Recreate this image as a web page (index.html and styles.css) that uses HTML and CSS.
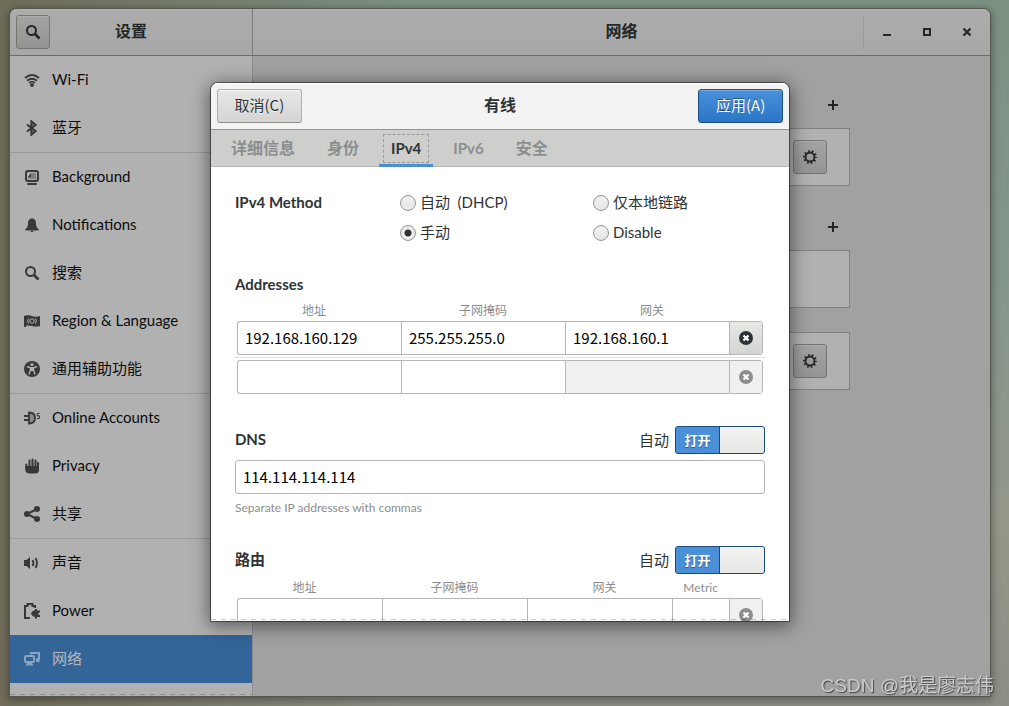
FILE: index.html
```html
<!DOCTYPE html>
<html lang="zh-CN">
<head>
    <meta charset="UTF-8">
    <meta name="viewport" content="width=device-width, initial-scale=1.0">
    <title>设置</title>
    <link rel="stylesheet" href="styles.css">
</head>
<body>
    <svg class="defs" aria-hidden="true">
        <symbol id="i-search" viewBox="0 0 16 16"><circle cx="6.5" cy="6.5" r="4.5" fill="none" stroke="currentColor" stroke-width="2"/><path d="M10 10l4.5 4.5" stroke="currentColor" stroke-width="2.6"/></symbol>
        <symbol id="i-gear" viewBox="0 0 16 16"><circle cx="8" cy="8" r="4.5" fill="none" stroke="currentColor" stroke-width="1.9"/><circle cx="8" cy="8" r="6" fill="none" stroke="currentColor" stroke-width="1.9" stroke-dasharray="1.6 2.17" stroke-dashoffset=".8"/></symbol>
        <symbol id="i-plus" viewBox="0 0 16 16"><path d="M8 3v10M3 8h10" stroke="currentColor" stroke-width="2"/></symbol>
        <symbol id="i-remove" viewBox="0 0 16 16"><circle cx="8" cy="8" r="7" fill="currentColor"/><path d="M5.5 5.5l5 5M10.5 5.5l-5 5" stroke="#fff" stroke-width="2.2"/></symbol>
    </svg>

    <div class="window">
        <header class="side-header">
            <button class="btn dim-btn" aria-label="搜索"><svg class="icon"><use href="#i-search"/></svg></button>
            <h1>设置</h1>
        </header>
        <header class="main-header">
            <h1>网络</h1>
            <div class="controls">
                <button aria-label="最小化"><svg class="icon" viewBox="0 0 16 16"><path d="M4 11h8" stroke="currentColor" stroke-width="2"/></svg></button>
                <button aria-label="最大化"><svg class="icon" viewBox="0 0 16 16"><path d="M5 5h6v6H5z" fill="none" stroke="currentColor" stroke-width="2"/></svg></button>
                <button aria-label="关闭"><svg class="icon" viewBox="0 0 16 16"><path d="M4.500 4.500l7 7M11.500 4.500l-7 7" stroke="currentColor" stroke-width="2.200"/></svg></button>
            </div>
        </header>

        <nav class="sidebar">
            <a href="#"><svg class="icon" viewBox="0 0 16 16"><g fill="none" stroke="currentColor" stroke-width="1.8"><path d="M1 6q7-6 14 0"/><path d="M3 8.700q5-4 10 0"/><path d="M5 11q3-2.400 6 0" stroke-width="1.500"/></g><circle cx="8" cy="13" r="2" fill="currentColor"/></svg>Wi-Fi</a>
            <a href="#"><svg class="icon" viewBox="0 0 16 16"><path d="M3 4.500l8.500 6.500L7.500 14.500V1.500L11.500 5 3 11.500" fill="none" stroke="currentColor" stroke-width="2.200"/></svg>蓝牙</a>
            <a href="#" class="sep"><svg class="icon" viewBox="0 0 16 16"><rect x="2" y="2" width="12" height="10" rx="2" fill="none" stroke="currentColor" stroke-width="2"/><path d="M7 4h5v6H4V8h3z" fill="currentColor" opacity=".4"/><path d="M4 8l3-4v4z" fill="currentColor"/><rect x="3" y="14" width="10" height="2" rx="1" fill="currentColor"/></svg>Background</a>
            <a href="#"><svg class="icon" viewBox="0 0 16 16"><path d="M8 1.500c-3 0-4 2.500-4 5 0 3-.6 4-2.500 5.500v1.500h13V12C12.600 10.500 12 9.500 12 6.500c0-2.500-1-5-4-5zM6.500 14h3a1.500 1.200 0 0 1-3 0z" fill="currentColor"/></svg>Notifications</a>
            <a href="#"><svg class="icon"><use href="#i-search"/></svg>搜索</a>
            <a href="#"><svg class="icon" viewBox="0 0 16 16"><path d="M0 3q4-1.500 8 0t8 0v10q-4 1-8 0t-6-.3V14H0z" fill="currentColor"/><circle cx="8" cy="8" r="2.200" fill="none" stroke="#b1b1b1"/><path d="M4.500 5.500q-1.500 2.500 0 5M11.500 5.500q1.500 2.500 0 5" fill="none" stroke="#b1b1b1"/></svg>Region &amp; Language</a>
            <a href="#"><svg class="icon" viewBox="0 0 16 16"><circle cx="8" cy="8" r="8" fill="currentColor"/><circle cx="8" cy="3.500" r="1.600" fill="#b1b1b1"/><path d="M3 5.500l3.500 1.200V9L5 13.500M13 5.500L9.500 6.700V9l1.500 4.500" fill="none" stroke="#b1b1b1" stroke-width="1.500"/><path d="M6 6h4v4H6z" fill="#b1b1b1"/></svg>通用辅助功能</a>
            <a href="#" class="sep"><svg class="icon" viewBox="0 0 16 16"><path d="M0 6h5M0 10h5" stroke="currentColor" stroke-width="2"/><path d="M5 2.500q6 0 6 5.500t-6 5.500z" fill="currentColor" fill-opacity=".3" stroke="currentColor" stroke-width="1.800"/><path d="M15.500 3.500h-2.300v2.300h2.300v2.700H13" fill="none" stroke="currentColor"/></svg>Online Accounts</a>
            <a href="#"><svg class="icon" viewBox="0 0 16 16"><path d="M5.500 9V2.500M8.500 9V1.500M11.500 9V2.500M14 9.500V5M2.300 10V6.500" stroke="currentColor" stroke-width="2" stroke-linecap="round"/><path d="M1.300 8H15v4q0 3.500-4 3.500H6q-4.700 0-4.700-4z" fill="currentColor"/></svg>Privacy</a>
            <a href="#"><svg class="icon" viewBox="0 0 16 16"><path d="M13 3L3 8l10 5" fill="none" stroke="currentColor" stroke-width="2"/><g fill="currentColor"><circle cx="13" cy="3" r="3"/><circle cx="3" cy="8" r="3"/><circle cx="13" cy="13" r="3"/></g></svg>共享</a>
            <a href="#" class="sep"><svg class="icon" viewBox="0 0 16 16"><path d="M0 5h2.500L6 2v12l-3.500-3H0z" fill="currentColor"/><path d="M8.500 5q2 3 0 6M11.500 3q3 5 0 10" fill="none" stroke="currentColor" stroke-width="1.800"/></svg>声音</a>
            <a href="#"><svg class="icon" viewBox="0 0 16 16"><path d="M6 15H1V3h2.500V1h5v2H11v2" fill="none" stroke="currentColor" stroke-width="2"/><path d="M7 10.500q1-3 4-3.500V6h2v1.500h3v2h-1.500v2.500H16v2h-3v1.500h-2V14q-3-.5-4-3.500z" fill="currentColor"/></svg>Power</a>
            <a href="#" class="active" aria-current="page"><svg class="icon" viewBox="0 0 16 16"><path d="M7 3.500V2h8v6h-2.500" fill="none" stroke="currentColor" stroke-width="2"/><rect x="1" y="5" width="9" height="6" rx="1" fill="none" stroke="currentColor" stroke-width="2"/><path d="M3 12h5l1.500 2.500h-8zM12 8h2.500l1.500 3h-4z" fill="currentColor"/></svg>网络</a>
            <div class="undershoot"></div>
        </nav>

        <main class="content">
            <div class="panel">
                <section>
                    <div class="panel-head"><button aria-label="添加有线"><svg class="icon"><use href="#i-plus"/></svg></button></div>
                    <div class="card"><button class="btn dim-btn" aria-label="选项"><svg class="icon"><use href="#i-gear"/></svg></button></div>
                </section>
                <section>
                    <div class="panel-head"><button aria-label="添加 VPN"><svg class="icon"><use href="#i-plus"/></svg></button></div>
                    <div class="card"></div>
                </section>
                <section>
                    <div class="card"><button class="btn dim-btn" aria-label="代理选项"><svg class="icon"><use href="#i-gear"/></svg></button></div>
                </section>
            </div>
        </main>

        <div class="overlay">
            <form class="dialog" role="dialog" aria-labelledby="dialog-title">
                <div class="dialog-header">
                    <button type="button" class="btn">取消(C)</button>
                    <h2 id="dialog-title">有线</h2>
                    <button type="submit" class="btn primary">应用(A)</button>
                </div>
                <div class="tabs" role="tablist">
                    <button type="button" role="tab">详细信息</button>
                    <button type="button" role="tab">身份</button>
                    <button type="button" role="tab" class="latin active" aria-selected="true">IPv4</button>
                    <button type="button" role="tab" class="latin">IPv6</button>
                    <button type="button" role="tab">安全</button>
                </div>
                <div class="dialog-body">
                    <div class="methods" role="radiogroup" aria-labelledby="method-label">
                        <h3 id="method-label">IPv4 Method</h3>
                        <label><input type="radio" name="method">自动&nbsp; (DHCP)</label>
                        <label><input type="radio" name="method">仅本地链路</label>
                        <label class="second"><input type="radio" name="method" checked>手动</label>
                        <label><input type="radio" name="method">Disable</label>
                    </div>

                    <h3>Addresses</h3>
                    <table class="entries">
                        <colgroup><col><col><col><col class="col-remove"></colgroup>
                        <thead>
                            <tr><th>地址</th><th>子网掩码</th><th class="gateway">网关</th><td></td></tr>
                        </thead>
                        <tbody>
                            <tr class="row">
                                <td><input type="text" aria-label="地址" value="192.168.160.129"></td>
                                <td><input type="text" aria-label="子网掩码" value="255.255.255.0"></td>
                                <td><input type="text" aria-label="网关" value="192.168.160.1"></td>
                                <td><button type="button" class="remove" aria-label="删除"><svg class="icon"><use href="#i-remove"/></svg></button></td>
                            </tr>
                            <tr><td colspan="4"><hr></td></tr>
                            <tr class="row">
                                <td><input type="text" aria-label="地址"></td>
                                <td><input type="text" aria-label="子网掩码"></td>
                                <td><input type="text" aria-label="网关" disabled></td>
                                <td><button type="button" class="remove" aria-label="删除" disabled><svg class="icon"><use href="#i-remove"/></svg></button></td>
                            </tr>
                        </tbody>
                    </table>

                    <div class="section-head">
                        <h3><label for="dns">DNS</label></h3>
                        <label class="switch">自动<input type="checkbox" checked><span class="track"><span class="on">打开</span><span class="knob"></span></span></label>
                    </div>
                    <input type="text" id="dns" class="entry" value="114.114.114.114">
                    <p class="hint">Separate IP addresses with commas</p>

                    <div class="section-head">
                        <h3>路由</h3>
                        <label class="switch">自动<input type="checkbox" checked><span class="track"><span class="on">打开</span><span class="knob"></span></span></label>
                    </div>
                    <table class="entries">
                        <colgroup><col><col><col><col class="col-metric"><col class="col-remove"></colgroup>
                        <thead>
                            <tr><th>地址</th><th>子网掩码</th><th class="gateway">网关</th><th>Metric</th><td></td></tr>
                        </thead>
                        <tbody>
                            <tr class="row">
                                <td><input type="text" aria-label="地址"></td>
                                <td><input type="text" aria-label="子网掩码"></td>
                                <td><input type="text" aria-label="网关"></td>
                                <td><input type="text" aria-label="Metric"></td>
                                <td><button type="button" class="remove" aria-label="删除" disabled><svg class="icon"><use href="#i-remove"/></svg></button></td>
                            </tr>
                        </tbody>
                    </table>
                </div>
                <div class="undershoot"></div>
            </form>
        </div>
    </div>
    <div class="watermark">CSDN @我是廖志伟</div>
</body>
</html>
```
FILE: styles.css
```css
* {
    box-sizing: border-box;
}
body {
    margin: 0;
    height: 100vh;
    padding: 9px 19px 10px 10px;
    font-family: Lato, "Noto Sans CJK SC", sans-serif;
    font-size: 15px;
    line-height: 24px;
    color: #2e3436;
    background: linear-gradient(to right, rgba(110, 105, 85, 0.9), rgba(110, 105, 85, 0) 40%),
        linear-gradient(#7c9182, #86968c 40%, #94988a 75%, #8b8f84);
}
h1, h2, h3, p {
    margin: 0;
    font-size: 15px;
}
h1, h2 {
    padding-bottom: 2px;
    font-size: 16px;
}
h3 {
    padding-bottom: 2px;
    line-height: 22px;
}
button, input {
    font: inherit;
    color: inherit;
    margin: 0;
}
button {
    border: none;
    background: none;
    padding: 0;
}
.defs {
    display: none;
}
.icon {
    display: block;
    flex: none;
    width: 16px;
    height: 16px;
}

.window {
    position: relative;
    height: 100%;
    display: grid;
    grid-template-columns: 243px 1fr;
    grid-template-rows: 47px minmax(0, 1fr);
    border-radius: 7px 7px 0 0;
    box-shadow: 0 0 0 1px #55574f, 0 2px 8px 2px rgba(0, 0, 0, 0.35);
    background: #a1a1a1;
}
.side-header, .main-header {
    display: grid;
    align-items: center;
    color: #222729;
    background: linear-gradient(#acacac, #a8a8a8);
    border-bottom: 1px solid #6b6b6b;
    box-shadow: inset 0 1px #b3b3b3;
}
.side-header {
    grid-template-columns: 1fr auto 1fr;
    padding-left: 6px;
    padding-right: 6px;
    border-right: 1px solid #7b7b7b;
    border-top-left-radius: 7px;
}
.main-header {
    grid-template-columns: 127px 1fr 127px;
    border-top-right-radius: 7px;
    text-align: center;
}
.main-header h1 {
    grid-column: 2;
}
.controls {
    display: flex;
    height: 34px;
    padding-left: 3px;
    border-left: 1px solid #999;
}
.controls button {
    width: 40px;
    display: grid;
    place-items: center;
    color: #202526;
}
.btn {
    min-width: 85px;
    height: 34px;
    padding: 0 15px;
    border: 1px solid #b0b0ab;
    border-bottom-color: #91918c;
    border-radius: 3px;
    background: linear-gradient(#e8e8e6, #d4d4d2);
    box-shadow: inset 0 1px rgba(255, 255, 255, 0.7);
    text-shadow: 0 1px rgba(255, 255, 255, 0.7);
}
.dialog-header .btn {
    font-family: "Noto Sans CJK SC", sans-serif;
    padding-bottom: 2px;
}
.dim-btn {
    min-width: 0;
    width: 34px;
    padding: 0;
    display: grid;
    place-items: center;
    color: #202526;
    border-color: #757572;
    background: linear-gradient(#a3a3a1, #949492);
    box-shadow: inset 0 1px #adadab;
}
.btn.primary {
    color: #fff;
    border-color: #1c5187;
    background: linear-gradient(#4a90d9, #2a76c6);
    box-shadow: inset 0 1px #75aae2;
    text-shadow: 0 -1px rgba(0, 0, 0, 0.4);
}

.sidebar {
    display: flex;
    flex-direction: column;
    overflow: hidden;
    background: #b1b1b1;
    border-right: 1px solid #8d8d8d;
}
.sidebar a {
    flex: none;
    height: 48px;
    display: flex;
    align-items: center;
    gap: 12px;
    padding: 0 14px 2px;
    color: #0c0c0c;
    text-decoration: none;
}
.sidebar a.sep {
    height: 49px;
    border-top: 1px solid #9b9b9b;
}
.sidebar a .icon {
    margin-top: 2px;
    color: #383838;
}
.sidebar a.active {
    color: #b3b8bd;
    background: #336598;
}
.sidebar a.active .icon {
    color: #8aa5c1;
}
.undershoot {
    height: 1px;
    background: repeating-linear-gradient(to right, rgba(0, 0, 0, 0.2) 0 5px, transparent 5px 10px);
}
.sidebar .undershoot {
    margin: auto 0 1px;
}

.content {
    overflow: hidden;
    padding-top: 32px;
    background: #a1a1a1;
}
.panel {
    width: 62%;
    margin: 0 auto;
    display: grid;
    gap: 24px;
}
.panel-head {
    display: flex;
    justify-content: flex-end;
    margin-bottom: 6px;
    color: #202526;
}
.panel-head button {
    width: 34px;
    height: 34px;
    display: grid;
    place-items: center;
}
.card {
    height: 58px;
    display: flex;
    justify-content: flex-end;
    align-items: center;
    padding: 0 22px;
    border: 1px solid #818181;
    background: #b1b1b1;
}

.overlay {
    position: absolute;
    inset: 0;
    padding: 74px 0 75px;
    display: flex;
    justify-content: center;
}
.dialog {
    position: relative;
    width: 59%;
    display: flex;
    flex-direction: column;
    background: #fff;
    border-radius: 7px 7px 0 0;
    overflow: hidden;
    box-shadow: 0 0 0 1px rgba(0, 0, 0, 0.45), 0 3px 18px 2px rgba(0, 0, 0, 0.5);
}
.dialog-header {
    flex: none;
    display: flex;
    justify-content: space-between;
    align-items: center;
    height: 47px;
    padding: 0 6px;
    background: #f3f3f3;
    border-bottom: 1px solid #949494;
    box-shadow: inset 0 1px #fff;
}
.tabs {
    flex: none;
    display: flex;
    gap: 8px;
    height: 37px;
    padding: 0 8px;
    background: #cececd;
    border-bottom: 1px solid #b6b6b3;
}
.tabs button {
    height: 37px;
    padding: 0 12px 2px;
    font-size: 16px;
    font-weight: bold;
    color: #8b8e8f;
}
.tabs .latin {
    font-size: 15px;
}
.tabs .active {
    color: #2e3436;
    box-shadow: inset 0 -3px #4a90d9;
    outline: 1px dashed #999b9b;
    outline-offset: -5px;
}
.dialog-body {
    flex: 1;
    min-height: 0;
    overflow: hidden;
    padding: 24px;
}
.methods {
    display: grid;
    grid-template-columns: 165px 193px 1fr;
    row-gap: 6px;
    margin-bottom: 28px;
}
.methods label {
    display: flex;
    align-items: center;
    height: 24px;
    padding-bottom: 2px;
    white-space: pre;
}
.methods .second {
    grid-column: 2;
}
input[type="radio"] {
    appearance: none;
    width: 16px;
    height: 16px;
    margin: 2px 4px 0 0;
    border: 1px solid #979792;
    border-radius: 50%;
    background: linear-gradient(#f1f1f0, #e6e6e4);
}
input[type="radio"]:checked {
    background: radial-gradient(circle, #2e3436 0 3px, #ededec 4px);
}

.entries {
    width: 100%;
    padding: 0 2px;
    border-spacing: 0;
    table-layout: fixed;
}
.entries th, .entries td {
    padding: 0;
}
.entries th {
    height: 24px;
    line-height: 20px;
    vertical-align: top;
    padding-top: 4px;
    font-size: 12px;
    font-weight: normal;
    color: #8b8e8f;
}
.entries th:first-child {
    padding-right: 10px;
}
.entries .gateway {
    padding-left: 10px;
}
.col-remove {
    width: 34px;
}
.col-metric {
    width: 57px;
}
.row td {
    height: 34px;
    border: 1px solid #b6b6b3;
    border-right: none;
}
.row td:first-child {
    border-radius: 3px 0 0 3px;
}
.row td:last-child {
    border-right: 1px solid #b6b6b3;
    border-radius: 0 3px 3px 0;
}
.row input, .entry {
    display: block;
    width: 100%;
    height: 32px;
    padding: 0 7px 2px;
    border: none;
    background: transparent;
    font-family: "Noto Sans CJK SC", sans-serif;
    color: #000;
}
.row input:disabled {
    background: #f0f0f0;
}
.remove {
    width: 100%;
    height: 32px;
    display: grid;
    place-items: center;
    background: linear-gradient(#e8e8e6, #d4d4d2);
}
.remove:disabled {
    color: #8b8e8f;
    background: #f0f0f0;
}
.entries hr {
    height: 1px;
    margin: 2px -2px;
    border: none;
    background: #e3e3e3;
}

.section-head {
    display: flex;
    justify-content: space-between;
    align-items: center;
    margin-top: 32px;
}
.hint + .section-head {
    margin-top: 28px;
}
.switch {
    display: flex;
    align-items: center;
    gap: 6px;
}
.switch input {
    position: absolute;
    opacity: 0;
}
.track {
    display: flex;
    width: 90px;
    height: 28px;
    border: 1px solid #1c4a7d;
    border-radius: 3px;
    background: #4a90d9;
    overflow: hidden;
}
.on {
    flex: 1;
    line-height: 26px;
    text-align: center;
    font-size: 13px;
    font-weight: bold;
    color: #fff;
    text-shadow: 0 1px 1px rgba(0, 0, 0, 0.4);
}
.knob {
    width: 45px;
    border-left: 1px solid #1c4a7d;
    background: linear-gradient(#f3f3f2, #e6e6e4);
}
.entry {
    height: 34px;
    margin-top: 6px;
    border: 1px solid #b6b6b3;
    border-radius: 3px;
}
.hint {
    margin-top: 4px;
    line-height: 20px;
    font-size: 12px;
    color: #8b8e8f;
}
.dialog .undershoot {
    position: absolute;
    left: 0;
    right: 0;
    bottom: 1px;
}

.watermark {
    position: fixed;
    right: 15px;
    bottom: 8px;
    font-family: "Liberation Sans", "Noto Sans CJK SC", sans-serif;
    font-size: 19px;
    color: #ccc;
    text-shadow: 1px 1px 1px #444;
}
```
